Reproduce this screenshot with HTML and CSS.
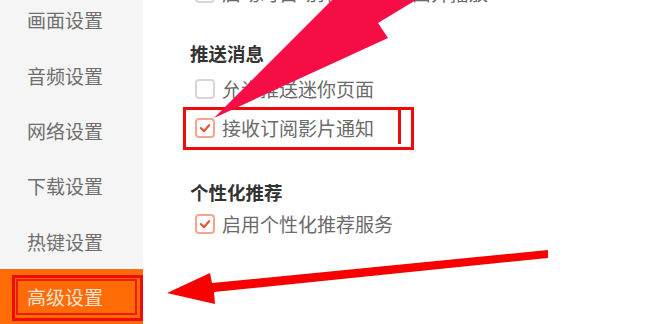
FILE: index.html
```html
<!DOCTYPE html>
<html lang="zh-CN">
<head>
<meta charset="utf-8">
<title>设置</title>
<link rel="stylesheet" href="styles.css">
</head>
<body>
<div class="page">
  <aside class="sidebar">
    <div class="nav-item">画面设置</div>
    <div class="nav-item">音频设置</div>
    <div class="nav-item">网络设置</div>
    <div class="nav-item">下载设置</div>
    <div class="nav-item">热键设置</div>
    <div class="nav-item active"><span class="nav-label">高级设置</span></div>
  </aside>
  <main class="content">
    <div class="option row0"><span class="box"></span><span class="label">启动时自动弹出迷你页面并播放</span></div>
    <div class="section-title title1">推送消息</div>
    <div class="option row1"><span class="box"></span><span class="label">允许推送迷你页面</span></div>
    <div class="option row2 highlighted"><span class="box checked"><svg viewBox="0 0 17 17"><path d="M4.2 8.6 L7.6 11.8 L12.8 5.6" /></svg></span><span class="label">接收订阅影片通知</span></div>
    <div class="section-title title2">个性化推荐</div>
    <div class="option row3"><span class="box checked"><svg viewBox="0 0 17 17"><path d="M4.2 8.6 L7.6 11.8 L12.8 5.6" /></svg></span><span class="label">启用个性化推荐服务</span></div>
  </main>
  <svg class="annot" viewBox="0 0 646 324" width="646" height="324">
    <polygon class="pink-arrow" points="332,0 214,118 388,38 378,23 416,0" />
    <polygon class="red-arrow" points="548,250 212,283 210,273 167,293 215,304 214,292 548,258" />
  </svg>
</div>
</body>
</html>
```
FILE: styles.css
```css
* { box-sizing: border-box; }
html, body { margin: 0; padding: 0; }
body {
  width: 646px;
  height: 324px;
  overflow: hidden;
  background: #ffffff;
  font-family: "Noto Sans CJK SC", "Noto Sans", sans-serif;
}
.page {
  position: relative;
  display: flex;
  width: 646px;
  height: 324px;
  overflow: hidden;
}
.sidebar {
  width: 143px;
  flex: none;
  background: #f5f5f5;
  display: flex;
  flex-direction: column;
}
.nav-item {
  height: 55.4px;
  line-height: 55.4px;
  padding-left: 27px;
  font-size: 19px;
  color: #6e6e6e;
  flex: none;
}
.nav-item:first-child { margin-top: -7.7px; }
.nav-item.active {
  position: relative;
  background: #ff6b06;
  color: #f8e2cf;
  height: 60px;
}
.nav-item.active::before {
  content: "";
  position: absolute;
  left: 12px;
  top: 5.5px;
  width: 125px;
  height: 40px;
  border: 3px solid #f20a0a;
}
.nav-item.active::after {
  content: "";
  position: absolute;
  left: 16px;
  top: 9.5px;
  width: 117px;
  height: 32px;
  border: 2px solid #f21a0a;
}
.nav-label { position: relative; }

.content {
  flex: 1;
  display: flex;
  flex-direction: column;
  padding-left: 47px;
}
.option {
  display: flex;
  align-items: center;
  height: 24px;
  margin-left: 5px;
  font-size: 19px;
  color: #6a6a6a;
  flex: none;
}
.section-title {
  height: 24px;
  line-height: 24px;
  font-size: 18.5px;
  font-weight: bold;
  color: #333333;
  flex: none;
}
.row0 { margin-top: -19px; }
.title1 { margin-top: 36px; }
.row1 { margin-top: 11.5px; }
.row2 { margin-top: 15px; }
.title2 { margin-top: 40px; }
.row3 { margin-top: 8.5px; }

.box {
  width: 20px;
  height: 20px;
  border: 2px solid #d6d6d6;
  border-radius: 4px;
  margin-right: 7px;
  flex: none;
  background: #fff;
  display: flex;
}
.box.checked { border-color: #f2a68c; }
.box svg { width: 16px; height: 16px; }
.box path {
  fill: none;
  stroke: #ea5234;
  stroke-width: 2.3;
  stroke-linecap: round;
  stroke-linejoin: round;
}
.label { white-space: nowrap; line-height: 24px; }

.highlighted { position: relative; }
.highlighted::before {
  content: "";
  position: absolute;
  left: -12px;
  top: -8.5px;
  width: 225px;
  height: 37px;
  border: 3px solid #f20a0a;
}
.highlighted::after {
  content: "";
  position: absolute;
  left: 203px;
  top: -8.5px;
  width: 3px;
  height: 37px;
  background: #f20a0a;
}

.annot {
  position: absolute;
  left: 0;
  top: 0;
  pointer-events: none;
}
.pink-arrow { fill: #f60d45; }
.red-arrow { fill: #f60000; }
```
